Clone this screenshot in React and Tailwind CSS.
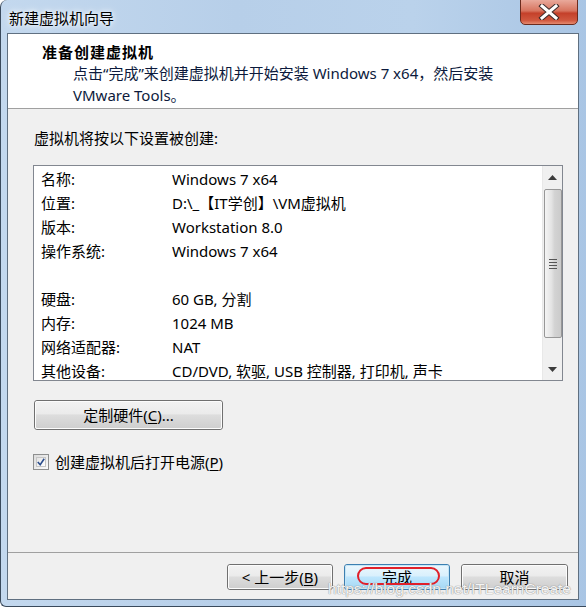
import React from "react";

const rows = [
  ["名称:", "Windows 7 x64"],
  ["位置:", "D:\\_【IT学创】\\VM虚拟机"],
  ["版本:", "Workstation 8.0"],
  ["操作系统:", "Windows 7 x64"],
  ["", ""],
  ["硬盘:", "60 GB, 分割"],
  ["内存:", "1024 MB"],
  ["网络适配器:", "NAT"],
  ["其他设备:", "CD/DVD, 软驱, USB 控制器, 打印机, 声卡"],
];

function WinButton({ children, primary, className = "", overlay = null }) {
  return (
    <div
      className={`relative flex items-center justify-center rounded-[3px] border ${
        primary ? "border-[#3c7fb1]" : "border-[#707070]"
      } ${className}`}
    >
      <div
        className={`absolute inset-0 rounded-[2px] border ${
          primary
            ? "border-[#c4e5f6] bg-[linear-gradient(to_bottom,#eaf6fd_0%,#d9f0fc_45%,#bee6fd_50%,#a7d9f5_100%)]"
            : "border-[#fcfcfc] bg-[linear-gradient(to_bottom,#f2f2f2_0%,#ebebeb_45%,#dddddd_50%,#cfcfcf_100%)]"
        }`}
      />
      <span className="relative">{children}</span>
      {overlay}
    </div>
  );
}

export default function App() {
  return (
    <div className="w-[586px] h-[608px] overflow-hidden bg-white font-['Noto_Sans','Noto_Sans_CJK_SC',sans-serif] text-[15px] text-black">
      <div className="relative w-[590px] h-[607px] rounded-tl-[7px] rounded-bl-[6px] border-l border-b border-[#3a4a5c] bg-[linear-gradient(to_right,#c3d8ee,#b7cfe9_40%,#bad2eb_70%,#a9c5e4)] pl-[6px]">
        {/* title bar */}
        <div className="h-[33px] flex items-center pl-[2px] pt-[2px]">
          <span className="text-[15px] leading-[20px] [text-shadow:0_0_8px_#ffffff,0_0_4px_#ffffff]">
            新建虚拟机向导
          </span>
        </div>
        <div className="absolute left-[519px] top-[-1px] w-[58px] h-[26px] rounded-b-[5px] border border-[#6b2b1e] bg-[linear-gradient(to_bottom,#e9a99b_0%,#d7745f_45%,#c4402a_55%,#d0583f_85%,#e58a70_100%)] flex items-center justify-center">
          <svg width="22" height="16" viewBox="0 0 22 16">
            <path d="M4 2 L18 14 M18 2 L4 14" stroke="#3b2b2b" strokeWidth="5" strokeLinecap="square" />
            <path d="M4 2 L18 14 M18 2 L4 14" stroke="#ffffff" strokeWidth="3" strokeLinecap="square" />
          </svg>
        </div>

        {/* client area */}
        <div className="w-[572px] h-[567px] border border-[#5f6f80] bg-[#f0f0f0] flex flex-col">
          <div className="h-[75px] bg-white border-b border-[#a0a0a0] pt-[8px]">
            <div className="pl-[34px] font-bold leading-[20px] tracking-[1px]">准备创建虚拟机</div>
            <div className="pl-[65px] leading-[22px] text-[#0c1a3c]">
              <div>点击“完成”来创建虚拟机并开始安装 Windows 7 x64，然后安装</div>
              <div>VMware Tools。</div>
            </div>
          </div>

          <div className="pl-[26px] mt-[19px] leading-[20px]">虚拟机将按以下设置被创建:</div>

          <div className="ml-[25px] mt-[17px] w-[530px] h-[216px] border border-[#828790] bg-white flex">
            <div className="flex-1 pt-[1px] pl-[7px]">
              {rows.map(([k, v], i) => (
                <div key={i} className="flex h-[24px] items-center whitespace-nowrap">
                  <div className="w-[131px]">{k}</div>
                  <div>{v}</div>
                </div>
              ))}
            </div>
            <div className="w-[20px] bg-[#f0f0f0] border-l border-[#e8e8e8] flex flex-col items-center">
              <div className="h-[22px] flex items-center justify-center">
                <svg width="9" height="5" viewBox="0 0 9 5">
                  <path d="M0 5 L4.5 0 L9 5 Z" fill="#3c3c3c" />
                </svg>
              </div>
              <div className="w-[18px] h-[149px] mt-[1px] rounded-[2px] border border-[#979797] bg-[linear-gradient(to_right,#f4f4f4,#e4e4e4_40%,#d3d3d3_60%,#cbcbcb)] flex items-center justify-center">
                <div className="flex flex-col gap-[2px]">
                  <div className="w-[8px] h-[1px] bg-[#555]" />
                  <div className="w-[8px] h-[1px] bg-[#555]" />
                  <div className="w-[8px] h-[1px] bg-[#555]" />
                  <div className="w-[8px] h-[1px] bg-[#555]" />
                </div>
              </div>
              <div className="flex-1" />
              <div className="h-[22px] flex items-center justify-center">
                <svg width="9" height="5" viewBox="0 0 9 5">
                  <path d="M0 0 L4.5 5 L9 0 Z" fill="#3c3c3c" />
                </svg>
              </div>
            </div>
          </div>

          <WinButton className="ml-[26px] mt-[19px] w-[189px] h-[30px]">
            定制硬件(<span className="underline underline-offset-2">C</span>)...
          </WinButton>

          <div className="ml-[25px] mt-[22px] flex items-center gap-[6px] leading-[20px]">
            <div className="w-[16px] h-[16px] border border-[#8e8f8f] bg-[linear-gradient(135deg,#dcdcdc,#fafafa)] p-[2px]">
              <div className="w-full h-full border border-[#c6c6c6] bg-[linear-gradient(135deg,#e4e4e4,#ffffff)] flex items-center justify-center">
                <svg width="10" height="10" viewBox="0 0 10 10">
                  <path d="M1 5 L4 8.5 L9 1" stroke="#2a4c8c" strokeWidth="2" fill="none" />
                </svg>
              </div>
            </div>
            <span>
              创建虚拟机后打开电源(<span className="underline underline-offset-2">P</span>)
            </span>
          </div>

          <div className="flex-1" />

          <div className="border-t border-[#a0a0a0] h-[47px] flex justify-end items-start pt-[11px] pr-[10px] gap-[11px] relative">
            <WinButton className="w-[106px] h-[26px]">
              &lt; 上一步(<span className="underline underline-offset-2">B</span>)
            </WinButton>
            <WinButton
              primary
              className="w-[106px] h-[26px]"
              overlay={
                <span className="absolute left-[12px] top-[2px] w-[83px] h-[18px] rounded-[9px] border-2 border-[#e0202a]" />
              }
            >
              完成
            </WinButton>
            <WinButton className="w-[107px] h-[26px]">取消</WinButton>
            <div className="absolute z-10 left-[320px] top-[26px] font-['Liberation_Sans',sans-serif] text-[15.5px] leading-[20px] text-white/90 [text-shadow:0_0_1px_#8a8a8a,0_0_1px_#8a8a8a] whitespace-nowrap">
              https://blog.csdn.net/ITLearnCreate
            </div>
          </div>
        </div>
      </div>
    </div>
  );
}
